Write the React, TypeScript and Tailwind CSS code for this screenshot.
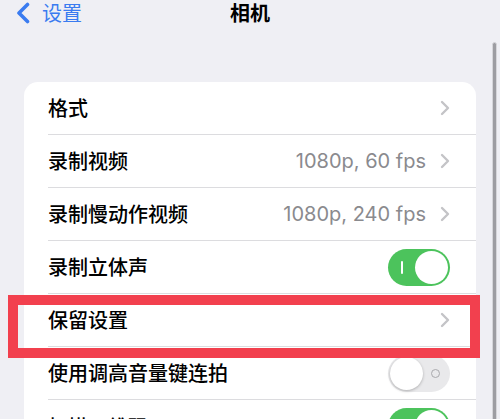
import { ReactNode } from 'react';

const font = { fontFamily: '"Noto Sans CJK SC", Inter, sans-serif' };

const Chevron = () => (
    <svg width="10" height="16" viewBox="0 0 10 16" className="shrink-0">
        <path d="M2 2 L8 8 L2 14" fill="none" stroke="#c4c4c7" strokeWidth="2.4" strokeLinecap="round" strokeLinejoin="round" />
    </svg>
);

const Toggle = ({ on }: { on: boolean }) => (
    <div
        className={
            on
                ? 'relative w-[62px] h-[37px] rounded-full bg-[#4cc35c] shrink-0'
                : 'relative w-[62px] h-[37px] rounded-full bg-[#e9e9eb] shrink-0'
        }
    >
        {on ? (
            <div className="absolute left-[13px] top-[12px] w-[2px] h-[13px] bg-white rounded-full" />
        ) : (
            <div className="absolute right-[10px] top-[14px] w-[9px] h-[9px] rounded-full border-[1.5px] border-[#a9a9ad]" />
        )}
        <div
            className={
                on
                    ? 'absolute right-[2px] top-[2px] w-[33px] h-[33px] rounded-full bg-white'
                    : 'absolute left-[2px] top-[2px] w-[33px] h-[33px] rounded-full bg-white shadow-[0_1px_3px_rgba(0,0,0,0.25)]'
            }
        />
    </div>
);

const Row = ({ label, right, last }: { label: string; right: ReactNode; last?: boolean }) => (
    <div className="pl-6">
        <div className={last ? 'h-[53px] flex items-center pr-[26px]' : 'h-[53px] flex items-center pr-[26px] border-b border-[#dcdcdf]'}>
            <span className="text-[20px] font-medium text-black flex-1 leading-none">{label}</span>
            {right}
        </div>
    </div>
);

const Value = ({ text }: { text: string }) => (
    <div className="flex items-center gap-[14px]">
        <span className="text-[20px] text-[#8a8a8e] leading-none" style={{ fontFamily: 'Inter, "Noto Sans CJK SC", sans-serif' }}>{text}</span>
        <Chevron />
    </div>
);

export default function App() {
    return (
        <div className="relative w-[500px] h-[419px] overflow-hidden bg-[#efeff4]" style={font}>
            <header className="grid grid-cols-[1fr_auto_1fr] items-center h-[26px]">
                <div className="flex items-center pl-[15px] gap-[11px]">
                    <svg width="16" height="22" viewBox="0 0 16 22">
                        <path d="M12.5 2.5 L4 11 L12.5 19.5" fill="none" stroke="#3a7bf0" strokeWidth="3.6" strokeLinecap="round" strokeLinejoin="round" />
                    </svg>
                    <span className="text-[20px] leading-[26px] text-[#3a7bf0]">设置</span>
                </div>
                <h1 className="text-[20px] font-bold text-black leading-[26px]">相机</h1>
                <div />
            </header>

            <div className="mt-[56px] mx-6 bg-white rounded-t-[14px]">
                <Row label="格式" right={<Chevron />} />
                <Row label="录制视频" right={<Value text="1080p, 60 fps" />} />
                <Row label="录制慢动作视频" right={<Value text="1080p, 240 fps" />} />
                <Row label="录制立体声" right={<Toggle on />} />
                <Row label="保留设置" right={<Chevron />} />
                <Row label="使用调高音量键连拍" right={<Toggle on={false} />} />
                <Row label="扫描二维码" right={<Toggle on />} last />
            </div>

            {/* scroll indicator */}
            <div className="absolute left-[492px] top-[42px] w-[5px] h-[400px] rounded-full bg-[#9d9da2] border border-[#d6d6da]" />

            {/* red highlight box */}
            <div className="absolute left-[8px] top-[295px] w-[472px] h-[63px] border-[10px] border-[#f2404e]" />
        </div>
    );
}
